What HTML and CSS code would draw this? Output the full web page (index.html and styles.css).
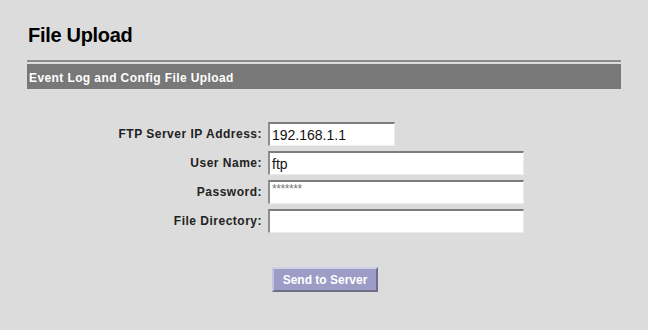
FILE: index.html
```html
<!DOCTYPE html>
<html>
<head>
<meta charset="utf-8">
<link rel="stylesheet" href="styles.css">
</head>
<body>
<div class="page">
  <h1 class="title">File Upload</h1>
  <div class="section">
    <div class="section-bar">Event Log and Config File Upload</div>
  </div>
  <form class="form">
    <label class="label" for="ip">FTP Server IP Address:</label>
    <input class="field field-short" id="ip" type="text" value="192.168.1.1">
    <label class="label" for="user">User Name:</label>
    <input class="field" id="user" type="text" value="ftp">
    <label class="label" for="pw">Password:</label>
    <input class="field field-pw" id="pw" type="text" value="*******">
    <label class="label" for="dir">File Directory:</label>
    <input class="field" id="dir" type="text" value="">
  </form>
  <div class="actions">
    <button class="send" type="button">Send to Server</button>
  </div>
</div>
</body>
</html>
```
FILE: styles.css
```css
html, body {
  margin: 0;
  padding: 0;
  background: #dcdcdc;
}
body {
  font-family: "Liberation Sans", Arial, sans-serif;
  color: #111;
}
.page {
  padding: 23px 27px 0 27px;
}
.title {
  margin: 0 0 0 1px;
  font-size: 20px;
  line-height: 24px;
  font-weight: bold;
  letter-spacing: -0.3px;
  color: #000;
}
.section {
  margin-top: 13px;
  border-top: 2px solid #8a8a8a;
  padding-top: 2px;
}
.section-bar {
  background: #787878;
  color: #fff;
  font-size: 12px;
  font-weight: bold;
  letter-spacing: 0.4px;
  height: 21px;
  line-height: 21px;
  padding: 4px 0 0 2px;
}
.form {
  display: grid;
  grid-template-columns: 145px 256px;
  column-gap: 6px;
  row-gap: 5px;
  align-items: center;
  margin: 33px 0 0 90px;
}
.label {
  justify-self: end;
  font-size: 12px;
  font-weight: bold;
  letter-spacing: 0.5px;
  color: #222;
  white-space: nowrap;
}
.field {
  box-sizing: border-box;
  width: 256px;
  height: 24px;
  margin: 0;
  padding: 1px 0 0 2px;
  background: #fff;
  border-top: 2px solid #7c7c7c;
  border-left: 2px solid #8e8e8e;
  border-right: 1px solid #ececec;
  border-bottom: 1px solid #ececec;
  font-family: "Liberation Sans", Arial, sans-serif;
  font-size: 14px;
  color: #111;
  outline: none;
}
.field-short {
  width: 127px;
}
.field-pw {
  font-size: 12px;
  color: #777;
  padding: 0 0 7px 2px;
  letter-spacing: -0.4px;
}
.actions {
  display: flex;
  justify-content: center;
  margin: 34px 0 0 2px;
}
.send {
  box-sizing: border-box;
  width: 106px;
  height: 25px;
  background: #9c9cc6;
  color: #fff;
  font-family: "Liberation Sans", Arial, sans-serif;
  font-size: 12px;
  font-weight: bold;
  border-top: 2px solid #d0d0e6;
  border-left: 2px solid #c4c4de;
  border-right: 2px solid #6e6e8a;
  border-bottom: 2px solid #6e6e8a;
  padding: 0;
}
```
